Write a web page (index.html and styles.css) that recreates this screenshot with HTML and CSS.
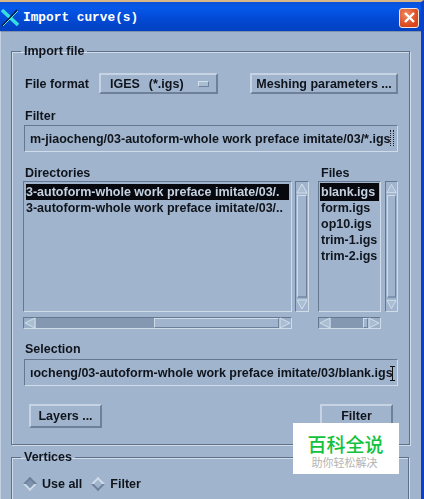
FILE: index.html
```html
<!DOCTYPE html>
<html lang="en">
<head>
  <meta charset="UTF-8" />
  <title>Import curve(s)</title>
  <link rel="stylesheet" href="styles.css">
</head>
<body>
  <div class="window">
    <div class="titlebar">
      <svg class="app-icon" width="18" height="18" viewBox="0 0 18 18">
        <path d="M1 1 L17 16" stroke="#35e0e0" stroke-width="3.4" fill="none"/>
        <path d="M1 17 L16 1" stroke="#0a1a40" stroke-width="1.4" fill="none"/>
        <path d="M2 17 L17 2" stroke="#4df0d0" stroke-width="1" fill="none"/>
      </svg>
      <span class="title">Import curve(s)</span>
      <div class="close">
        <svg width="13" height="13" viewBox="0 0 13 13">
          <path d="M2 2 L11 11 M11 2 L2 11" stroke="#fff" stroke-width="2.4" fill="none"/>
        </svg>
      </div>
    </div>

    <div class="content">
      <fieldset class="group group-file">
        <legend>Import file</legend>

        <div class="format-row">
          <span class="format-label">File format</span>
          <div class="btn option-menu">
            <span>IGES&nbsp; (*.igs)</span>
            <i class="option-mark"></i>
          </div>
          <div class="btn meshing">Meshing parameters ...</div>
        </div>

        <div class="label label-filter">Filter</div>
        <div class="field">
          <span>m-jiaocheng/03-autoform-whole work preface imitate/03/*.igs</span>
          <i class="dots"></i>
        </div>

        <div class="lists">
          <div class="list-col">
            <div class="label">Directories</div>
            <div class="list-row">
              <div class="list list-dirs">
                <div class="item selected">3-autoform-whole work preface imitate/03/.</div>
                <div class="item">3-autoform-whole work preface imitate/03/..</div>
              </div>
              <div class="vscroll">
                <svg class="arrow" width="12" height="13" viewBox="0 0 12 13"><path d="M6 2 L11 11 H1 Z" fill="#a9bdd3" stroke="#d3dfea"/></svg>
                <div class="vtrack"></div>
                <svg class="arrow" width="12" height="13" viewBox="0 0 12 13"><path d="M6 11 L11 2 H1 Z" fill="#a9bdd3" stroke="#d3dfea"/></svg>
              </div>
            </div>
            <div class="hscroll hscroll-dirs">
              <svg class="arrow" width="12" height="12" viewBox="0 0 12 12"><path d="M1 6 L11 1 V11 Z" fill="#a9bdd3" stroke="#d3dfea"/></svg>
              <div class="htrack track-a"></div>
              <div class="thumb"></div>
              <svg class="arrow" width="12" height="12" viewBox="0 0 12 12"><path d="M11 6 L1 1 V11 Z" fill="#a9bdd3" stroke="#d3dfea"/></svg>
            </div>
          </div>

          <div class="list-col col-files">
            <div class="label">Files</div>
            <div class="list-row">
              <div class="list list-files">
                <div class="item selected boxed">blank.igs</div>
                <div class="item">form.igs</div>
                <div class="item">op10.igs</div>
                <div class="item">trim-1.igs</div>
                <div class="item">trim-2.igs</div>
              </div>
              <div class="vscroll">
                <svg class="arrow" width="11" height="13" viewBox="0 0 12 13"><path d="M6 2 L11 11 H1 Z" fill="#a9bdd3" stroke="#d3dfea"/></svg>
                <div class="vtrack"></div>
                <svg class="arrow" width="11" height="13" viewBox="0 0 12 13"><path d="M6 11 L11 2 H1 Z" fill="#a9bdd3" stroke="#d3dfea"/></svg>
              </div>
            </div>
            <div class="hscroll hscroll-files">
              <svg class="arrow" width="12" height="12" viewBox="0 0 12 12"><path d="M1 6 L11 1 V11 Z" fill="#a9bdd3" stroke="#d3dfea"/></svg>
              <div class="htrack track-b"></div>
              <div class="thumb"></div>
              <svg class="arrow" width="12" height="12" viewBox="0 0 12 12"><path d="M11 6 L1 1 V11 Z" fill="#a9bdd3" stroke="#d3dfea"/></svg>
            </div>
          </div>
        </div>

        <div class="label label-selection">Selection</div>
        <div class="field">
          <span>ıocheng/03-autoform-whole work preface imitate/03/blank.igs</span>
          <i class="caret"></i>
        </div>

        <div class="actions">
          <div class="btn action">Layers ...</div>
          <div class="btn action">Filter</div>
        </div>
      </fieldset>

      <fieldset class="group group-vertices">
        <legend>Vertices</legend>
        <div class="radios">
          <i class="radio radio-on"></i>
          <span class="radio-text">Use all</span>
          <i class="radio"></i>
          <span class="radio-text">Filter</span>
        </div>
      </fieldset>
    </div>

    <div class="watermark">
      <div class="wm-big">百科全说</div>
      <div class="wm-small">助你轻松解决</div>
    </div>
  </div>
</body>
</html>
```

FILE: styles.css
```css
* {
  box-sizing: border-box;
}

html,
body {
  margin: 0;
  padding: 0;
  height: 100%;
  overflow: hidden;
}

body {
  font-family: "Liberation Sans", Arial, sans-serif;
  font-size: 12.5px;
  font-weight: bold;
  color: #10141c;
  background-color: #a0b5cd;
}

.window {
  position: relative;
  width: 424px;
  height: 499px;
  display: flex;
  flex-direction: column;
  border-top: 2px solid #d8b888;
  border-right: 3px solid #0a3fc8;
  overflow: hidden;
}

.titlebar {
  display: flex;
  align-items: center;
  flex: none;
  height: 29px;
  padding: 2px 2px 0 1px;
  background: linear-gradient(to bottom, #0a52d8 0%, #0558ea 20%, #0249d4 60%, #0341c0 100%);
}

.app-icon {
  flex: none;
  margin-right: 4px;
}

.title {
  flex: 1;
  font-family: "Liberation Mono", monospace;
  font-size: 12.8px;
  color: #fff;
}

.close {
  display: flex;
  align-items: center;
  justify-content: center;
  width: 20px;
  height: 20px;
  border: 1px solid #f4e4d8;
  border-radius: 3px;
  background: radial-gradient(circle at 35% 30%, #ef8a60, #d9461c 70%);
}

.content {
  flex: 1;
  padding: 12px 11px 0 10px;
  border-top: 1px solid #7e93ad;
  border-left: 1px solid #c2d0e0;
  filter: blur(0.3px);
}

.group {
  margin: 0;
  padding: 0;
  width: 398px;
  border: 1px solid #5f7188;
  box-shadow: 1px 1px 0 #d0dcea, inset 1px 1px 0 #d0dcea;
}

.group legend {
  margin-left: -2px;
  padding: 0 3px;
  line-height: 14px;
}

.group-file {
  height: 401px;
  padding: 15px 11px 0 11px;
}

.group-vertices {
  height: 60px;
  margin-top: 5px;
  padding: 13px 11px 0 11px;
}

.btn {
  display: flex;
  align-items: center;
  justify-content: center;
  background-color: #a0b5cd;
  border: 2px solid;
  border-color: #c5d3e2 #6e8199 #6e8199 #c5d3e2;
}

.format-row {
  display: flex;
  align-items: center;
  height: 21px;
}

.format-label {
  width: 76px;
  flex: none;
  padding-left: 2px;
}

.option-menu {
  width: 119px;
  height: 21px;
  padding: 0 7px 0 9px;
  justify-content: space-between;
  word-spacing: 1px;
}

.option-mark {
  width: 11px;
  height: 6px;
  background-color: #a9bdd3;
  border: 1px solid;
  border-color: #d3dfea #6e8199 #6e8199 #d3dfea;
}

.meshing {
  width: 148px;
  height: 21px;
  margin-left: 32px;
}

.label {
  line-height: 14px;
  padding-left: 2px;
}

.label-filter {
  margin-top: 15px;
  margin-bottom: 2px;
}

.label-selection {
  margin-top: 13px;
  margin-bottom: 3px;
}

.field {
  position: relative;
  display: flex;
  align-items: center;
  width: 374px;
  height: 27px;
  margin-left: 1px;
  padding-left: 5px;
  overflow: hidden;
  white-space: nowrap;
  border: 1px solid;
  border-color: #66788f #d0dcea #d0dcea #66788f;
}

.dots {
  position: absolute;
  right: 3px;
  top: 4px;
  width: 4px;
  height: 16px;
  border-left: 1px dotted #222;
  border-right: 1px dotted #222;
}

.caret {
  position: absolute;
  right: 2px;
  top: 6px;
  width: 5px;
  height: 15px;
  border-top: 1px solid #111;
  border-bottom: 1px solid #111;
  background: linear-gradient(#111, #111) center / 1px 100% no-repeat;
}

.lists {
  display: flex;
  gap: 9px;
  margin-top: 14px;
}

.list-col {
  display: flex;
  flex-direction: column;
  flex: none;
}

.list-col .label {
  margin-bottom: 1px;
}

.col-files .label {
  padding-left: 3px;
}

.list-row {
  display: flex;
  gap: 3px;
  height: 131px;
}

.col-files .list-row {
  gap: 4px;
}

.col-files .vscroll {
  width: 13px;
}

.list {
  overflow: hidden;
  padding: 2px;
  white-space: nowrap;
  line-height: 16px;
  border: 1px solid;
  border-color: #66788f #d0dcea #d0dcea #66788f;
}

.list-dirs {
  width: 269px;
}

.list-files {
  width: 63px;
}

.item {
  height: 16px;
}

.list-dirs .selected {
  width: 263px;
}

.selected {
  color: #c4d2e2;
  background-color: #08090e;
}

.boxed {
  width: 57px;
  outline: 1px solid #08090e;
}

.vscroll {
  display: flex;
  flex-direction: column;
  align-items: center;
  width: 14px;
  border: 1px solid;
  border-color: #66788f #d0dcea #d0dcea #66788f;
}

.vtrack {
  flex: 1;
  width: calc(100% - 2px);
  border: 1px solid;
  border-color: #d0dcea #6e8199 #7e93ad #d0dcea;
  border-bottom-width: 2px;
}

.arrow {
  flex: none;
}

.hscroll {
  display: flex;
  align-items: center;
  height: 12px;
  margin-top: 5px;
  background-color: #9ab0c8;
  border: 1px solid;
  border-color: #66788f #d0dcea #d0dcea #66788f;
}

.hscroll-dirs {
  width: 269px;
}

.hscroll-files {
  width: 63px;
}

.htrack {
  height: 100%;
  background-color: #8499b1;
}

.track-a {
  width: 118px;
}

.track-b {
  width: 32px;
}

.thumb {
  flex: 1;
  height: 100%;
  background-color: #a0b5cd;
  border: 1px solid;
  border-color: #d0dcea #6e8199 #6e8199 #d0dcea;
}

.actions {
  display: flex;
  justify-content: space-between;
  width: 364px;
  margin-top: 18px;
  margin-left: 6px;
}

.action {
  width: 73px;
  height: 24px;
  padding-bottom: 1px;
}

.radios {
  display: flex;
  align-items: center;
}

.radio {
  flex: none;
  width: 10px;
  height: 10px;
  margin: 0 7px 0 2px;
  transform: rotate(45deg);
  background-color: #a0b5cd;
  border: 2px solid;
  border-color: #d0dcea #6e8199 #6e8199 #d0dcea;
}

.radio-on {
  background-color: #7e93ad;
  border-color: #6e8199 #d0dcea #d0dcea #6e8199;
}

.radio-text {
  margin-right: 9px;
}

/* watermark sits on top of the dialog */
.watermark {
  position: absolute;
  left: 293px;
  top: 421px;
  width: 106px;
  height: 51px;
  padding: 10px 1px 0 0;
  text-align: center;
  background-color: #fff;
  font-family: "Noto Sans CJK SC", sans-serif;
}

.wm-big {
  font-size: 19px;
  line-height: 22px;
  font-weight: 500;
  color: #12c23c;
}

.wm-small {
  padding-right: 2px;
  font-size: 11px;
  line-height: 14px;
  font-weight: 400;
  color: #b4b4b4;
}
```
